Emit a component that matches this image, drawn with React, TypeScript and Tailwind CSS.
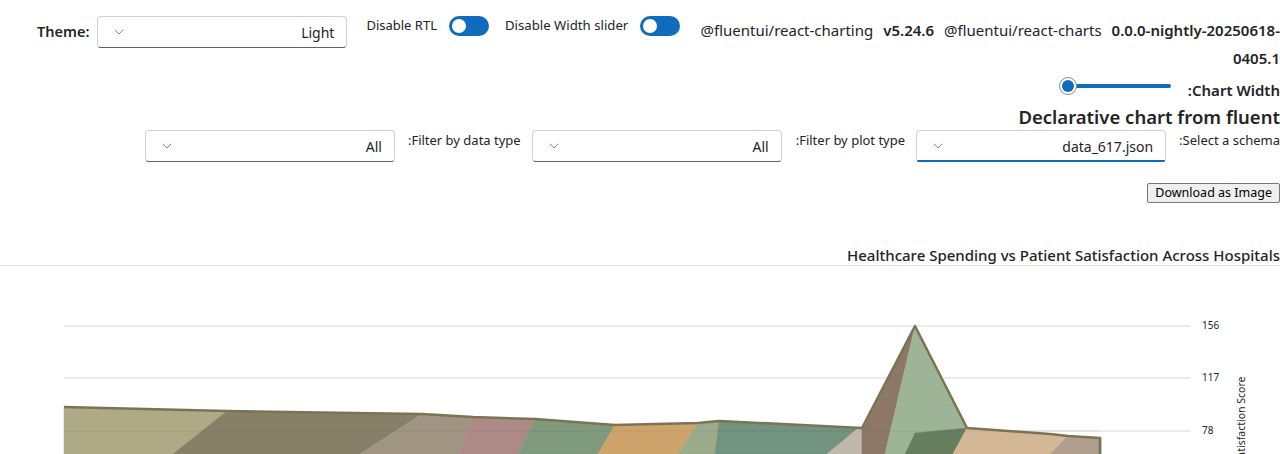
import React from 'react';
import { ChevronDown } from 'lucide-react';

const font = { fontFamily: '"Noto Sans", "Open Sans", sans-serif' };

const Dropdown: React.FC<{ value: string; focused?: boolean; className?: string }> = ({
  value,
  focused = false,
  className = '',
}) => (
  <div
    dir="ltr"
    className={`relative flex h-8 w-[250px] shrink-0 items-center rounded border border-[#d1d1d1] bg-white pl-[13px] pr-3 ${
      focused ? 'border-b-[#0f6cbd]' : 'border-b-[#616161]'
    } ${className}`}
  >
    <ChevronDown className="h-4 w-4 shrink-0 text-[#707070]" strokeWidth={1.25} />
    <span className="flex-1 text-right text-[14px] text-[#242424]">{value}</span>
    {focused && <div className="absolute inset-x-0 -bottom-px h-[2px] rounded-b bg-[#0f6cbd]" />}
  </div>
);

const Toggle: React.FC = () => (
  <div className="flex h-5 w-10 shrink-0 items-center rounded-full bg-[#0f6cbd] px-[3px]">
    <div className="h-[14px] w-[14px] rounded-full bg-white" />
  </div>
);

type Area = { fill: string; pts: string };

const areas: Area[] = [
  { fill: '#ADAA85', pts: '64,141 227,145 173,188 64,188' },
  { fill: '#878069', pts: '227,145 422,148 360,188 173,188' },
  { fill: '#A09483', pts: '422,148 473,151 458,188 360,188' },
  { fill: '#AD8A87', pts: '473,151 535,153 518,188 458,188' },
  { fill: '#7F9A7D', pts: '535,153 615,159 598,188 518,188' },
  { fill: '#CFA46C', pts: '615,159 698,157 678,188 598,188' },
  { fill: '#9BAA88', pts: '698,157 719,155 715,188 678,188' },
  { fill: '#72937F', pts: '719,155 862,162 827,188 715,188' },
  { fill: '#C1B8AD', pts: '857,163 862,162 862,188 827,188' },
  { fill: '#8D7868', pts: '862,162 915,60 885,188 862,188' },
  { fill: '#9DB497', pts: '915,60 967,162 915,167 905,188 885,188' },
  { fill: '#667E5E', pts: '915,167 967,162 953,188 905,188' },
  { fill: '#D4B896', pts: '967,162 1068,170 1050,188 953,188' },
  { fill: '#B09E8E', pts: '1068,170 1099,172 1099,188 1050,188' },
  { fill: '#72937F', pts: '1099,172 1101,172 1101,188 1099,188' },
];

const outline =
  '64,141 227,145 422,148 473,151 535,153 615,159 698,157 719,155 862,162 915,60 967,162 1050,168 1068,170 1100,172 1100,188';

const Chart: React.FC = () => (
  <svg width={1280} height={188} className="block">
    {[60, 112, 165].map((y) => (
      <line key={y} x1={64} x2={1190} y1={y} y2={y} stroke="#d6d6d6" strokeWidth={1} />
    ))}
    {areas.map((a, i) => (
      <polygon key={i} points={a.pts} fill={a.fill} stroke={a.fill} strokeWidth={0.5} />
    ))}
    <line x1={64} x2={1100} y1={165} y2={165} stroke="#000" strokeOpacity={0.06} strokeWidth={1} />
    <polyline points={outline} fill="none" stroke="#7b7353" strokeWidth={2.5} strokeLinejoin="round" />
    {[
      [60, '156'],
      [112, '117'],
      [165, '78'],
    ].map(([y, t]) => (
      <text
        key={t as string}
        x={1202}
        y={y as number}
        dominantBaseline="middle"
        fontSize={10}
        fill="#242424"
        style={font}
      >
        {t}
      </text>
    ))}
    <text
      x={1245}
      y={154}
      transform="rotate(-90 1245 154)"
      textAnchor="middle"
      fontSize={10.5}
      fill="#242424"
      style={font}
    >
      Satisfaction Score
    </text>
  </svg>
);

export default function App() {
  return (
    <div className="h-[454px] w-[1280px] overflow-hidden bg-white text-[#242424]" style={font}>
      {/* top controls */}
      <div className="flex items-start whitespace-nowrap pl-[37px] pt-4">
        <div className="flex h-8 shrink-0 items-center gap-2">
          <span className="text-[14.5px] font-semibold">Theme:</span>
          <Dropdown value="Light" />
        </div>
        <div className="ml-[19px] flex h-5 shrink-0 items-center gap-3 text-[13px]">
          <span>Disable RTL</span>
          <Toggle />
        </div>
        <div className="ml-4 flex h-5 shrink-0 items-center gap-3 text-[13.2px]">
          <span>Disable Width slider</span>
          <Toggle />
        </div>
        <div className="ml-4 min-w-0 flex-1 text-right text-[15px] leading-7">
          <div className="flex justify-end gap-[10px]">
            <span>@fluentui/react-charting</span>
            <span className="font-semibold">v5.24.6</span>
            <span>@fluentui/react-charts</span>
            <span className="font-semibold">0.0.0-nightly-20250618-</span>
          </div>
          <div className="font-semibold">0405.1</div>
        </div>
      </div>

      <div dir="rtl">
        {/* width slider */}
        <div className="flex h-7 items-center">
          <span className="mt-2 text-[15px] font-semibold">Chart Width:</span>
          <div className="mr-[17px] flex w-[112px] items-center">
            <div className="h-1 flex-1 rounded-full bg-[#0f6cbd]" />
            <div className="-mr-1 flex h-[18px] w-[18px] items-center justify-center rounded-full border border-[#8a8a8a] bg-white">
              <div className="h-3 w-3 rounded-full bg-[#0f6cbd]" />
            </div>
          </div>
        </div>

        <div className="mt-1 text-[18.5px] font-semibold leading-[26px]">Declarative chart from fluent</div>

        {/* filters */}
        <div className="flex items-start whitespace-nowrap">
          <span className="text-[13px] leading-5">Select a schema:</span>
          <Dropdown value="data_617.json" focused className="mr-[13px]" />
          <span className="mr-[11px] text-[13px] leading-5">Filter by plot type:</span>
          <Dropdown value="All" className="mr-[14px]" />
          <span className="mr-[11px] text-[13px] leading-5">Filter by data type:</span>
          <Dropdown value="All" className="mr-[13px]" />
        </div>

        <div className="mt-[21px] flex">
          <button className="ml-px h-5 rounded-[2px] border border-[#767676] bg-[#efefef] px-[7px] text-[12.5px] leading-none text-black">
            Download as Image
          </button>
        </div>

        <div className="mt-[42px] border-b border-[#e0e0e0] text-[15px] font-medium leading-5">
          Healthcare Spending vs Patient Satisfaction Across Hospitals
        </div>

        <div dir="ltr">
          <Chart />
        </div>
      </div>
    </div>
  );
}
